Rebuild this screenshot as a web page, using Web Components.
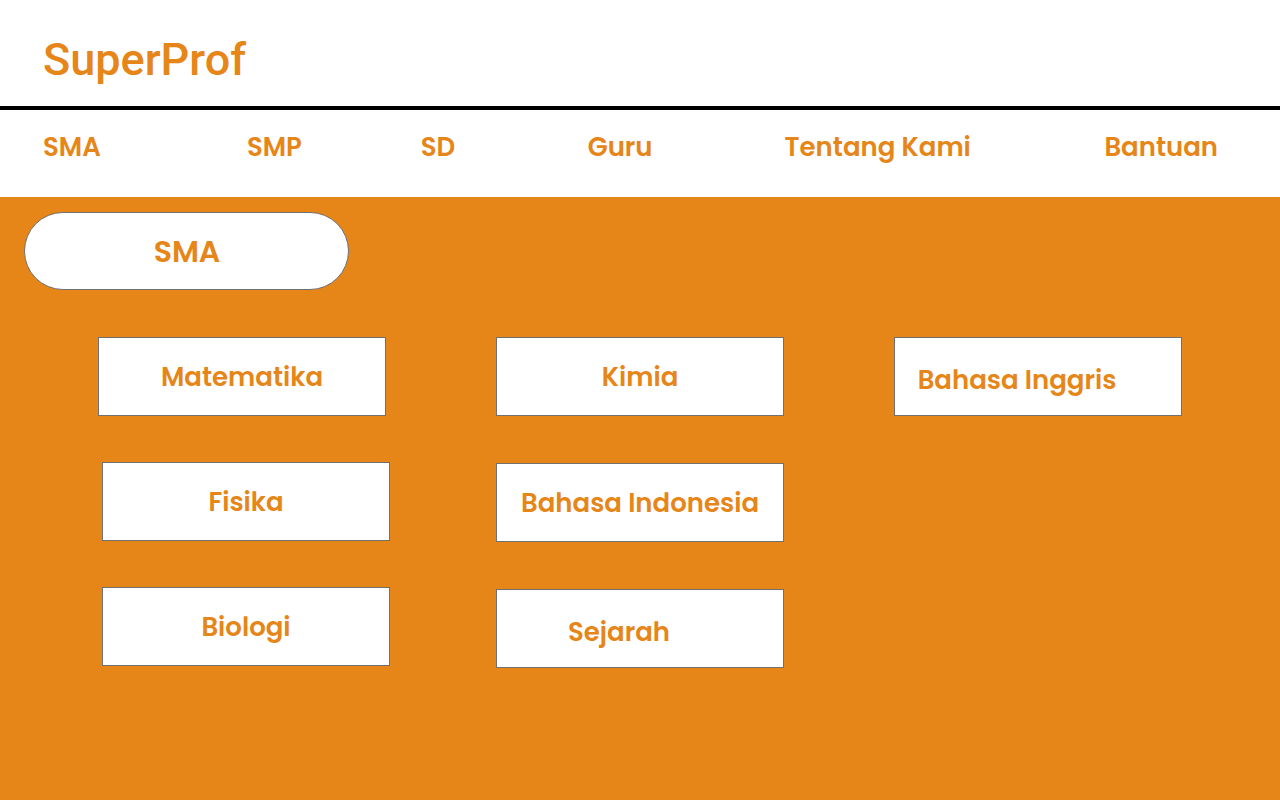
<!DOCTYPE html>
<html lang="id">
<head>
<meta charset="utf-8">
<meta name="viewport" content="width=device-width, initial-scale=1">
<title>SuperProf</title>
<style>
  html, body { margin: 0; min-height: 100%; }
  body {
    --brand: #e68618;
    --line: #707070;
    background: var(--brand);
    color: var(--brand);
    font-family: Poppins, Inter, sans-serif;
    font-weight: 600;
    font-size: 26px;
    line-height: 40px;
  }
</style>
</head>
<body>
<site-header></site-header>
<site-nav></site-nav>
<main>
  <level-title>SMA</level-title>
  <subject-grid>
    <subject-column compact>
      <subject-card>Matematika</subject-card>
      <subject-card nested>Fisika</subject-card>
      <subject-card nested>Biologi</subject-card>
    </subject-column>
    <subject-column>
      <subject-card>Kimia</subject-card>
      <subject-card>Bahasa Indonesia</subject-card>
      <subject-card leading>Sejarah</subject-card>
    </subject-column>
    <subject-column>
      <subject-card leading>Bahasa Inggris</subject-card>
    </subject-column>
  </subject-grid>
</main>
<script>
  const define = (name, html) => {
    const template = document.createElement('template');
    template.innerHTML = html;
    customElements.define(name, class extends HTMLElement {
      constructor() {
        super();
        this.attachShadow({ mode: 'open' }).append(template.content.cloneNode(true));
      }
    });
  };

  define('site-header', `
    <style>
      :host { display: block; background: #fff; border-bottom: 4px solid #000; }
      header { padding: 32px 43px 18px; }
      a {
        color: inherit; text-decoration: none;
        display: inline-block; vertical-align: top;
        font: 500 45px/56px Roboto, sans-serif;
      }
    </style>
    <header><a href="#">SuperProf</a></header>`);

  define('site-nav', `
    <style>
      :host { display: block; background: #fff; }
      nav {
        display: grid;
        grid-template-columns: 204fr 174fr 167fr 197fr 320fr 113fr;
        padding: 17px 62px 30px 43px;
      }
      a { color: inherit; text-decoration: none; white-space: nowrap; }
    </style>
    <nav>
      <a href="#sma">SMA</a>
      <a href="#smp">SMP</a>
      <a href="#sd">SD</a>
      <a href="#guru">Guru</a>
      <a href="#tentang">Tentang Kami</a>
      <a href="#bantuan">Bantuan</a>
    </nav>`);

  define('level-title', `
    <style>
      :host { display: block; padding: 15px 24px 0; }
      h1 {
        box-sizing: border-box; width: 325px; max-width: 100%;
        margin: 0; padding: 19px 0 17px 1px;
        background: #fff; border: 1px solid var(--line); border-radius: 39px;
        font-size: 30px; font-weight: 600; line-height: 40px; text-align: center;
      }
    </style>
    <h1><slot></slot></h1>`);

  define('subject-grid', `
    <style>
      :host {
        display: flex; flex-wrap: wrap; justify-content: space-between;
        gap: 47px; padding: 47px 98px;
      }
    </style>
    <slot></slot>`);

  define('subject-column', `
    <style>
      :host { display: flex; flex-direction: column; gap: 47px; width: 288px; }
      :host([compact]) { gap: 46px; }
    </style>
    <slot></slot>`);

  define('subject-card', `
    <style>
      :host { display: block; width: 288px; }
      :host([nested]) { margin-left: 4px; }
      a {
        box-sizing: border-box; display: flex; align-items: center; justify-content: center;
        height: 79px;
        background: #fff; border: 1px solid var(--line);
        color: inherit; text-decoration: none; white-space: nowrap;
      }
      :host([leading]) a { padding: 6px 42px 0 0; }
    </style>
    <a href="#"><slot></slot></a>`);
</script>
</body>
</html>
